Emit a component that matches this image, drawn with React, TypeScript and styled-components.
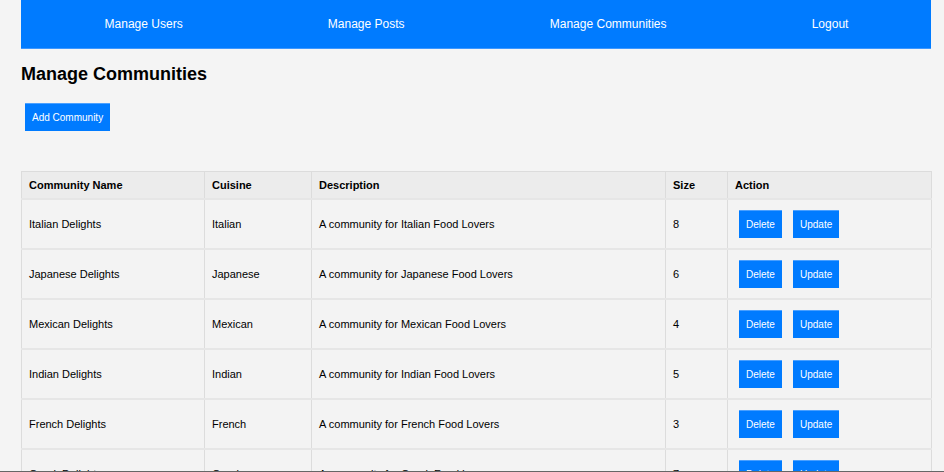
import React from "react";
import styled, { createGlobalStyle } from "styled-components";

const Global = createGlobalStyle`
  html, body { margin: 0; padding: 0; background: #f4f4f4; }
  body { font-family: "Liberation Sans", Arial, sans-serif; color: #000; overflow: hidden; }
  * { box-sizing: border-box; }
`;

const Page = styled.div`
  padding: 0 13px 0 21px;
`;

const Nav = styled.nav`
  height: 49px;
  background: #007bff;
  border-bottom: 1px solid #3d97ff;
  padding: 0 10px 0 11px;
  display: flex;
  align-items: center;
  justify-content: space-around;
`;

const NavLink = styled.a`
  color: #fff;
  font-size: 12px;
  text-decoration: none;
`;

const Title = styled.h2`
  font-size: 18px;
  line-height: 21px;
  font-weight: bold;
  margin: 15px 0 14px;
`;

const Button = styled.button`
  display: inline-block;
  background: #007bff;
  color: #fff;
  border: none;
  border-top: 1px solid #4aa0ff;
  height: 28px;
  padding: 0 7px;
  margin: 4px;
  font-family: "Liberation Sans", Arial, sans-serif;
  font-size: 10px;
  vertical-align: middle;
  cursor: pointer;
`;

const Table = styled.table`
  margin-top: 36px;
  width: 910px;
  border-collapse: collapse;
  table-layout: fixed;
  font-size: 11px;
`;

const Th = styled.th<{ $w: number }>`
  width: ${(p) => p.$w}px;
  height: 27px;
  padding: 0 7px;
  text-align: left;
  font-weight: bold;
  background: #ececec;
  border: 1px solid #dcdcdc;
`;

const Td = styled.td`
  height: 50px;
  padding: 0 7px;
  border: 1px solid #dcdcdc;
  border-top: 2px solid #e6e6e6;
  background: #f3f3f3;
  white-space: nowrap;
`;

const BottomEdge = styled.div`
  position: fixed;
  left: 0;
  right: 0;
  bottom: 0;
  height: 1px;
  background: #666;
`;

const rows = [
  { name: "Italian Delights", cuisine: "Italian", size: 8 },
  { name: "Japanese Delights", cuisine: "Japanese", size: 6 },
  { name: "Mexican Delights", cuisine: "Mexican", size: 4 },
  { name: "Indian Delights", cuisine: "Indian", size: 5 },
  { name: "French Delights", cuisine: "French", size: 3 },
  { name: "Greek Delights", cuisine: "Greek", size: 7 },
];

export default function App() {
  return (
    <>
      <Global />
      <Page>
        <Nav>
          <NavLink href="#">Manage Users</NavLink>
          <NavLink href="#">Manage Posts</NavLink>
          <NavLink href="#">Manage Communities</NavLink>
          <NavLink href="#">Logout</NavLink>
        </Nav>
        <Title>Manage Communities</Title>
        <Button>Add Community</Button>
        <Table>
          <thead>
            <tr>
              <Th $w={183}>Community Name</Th>
              <Th $w={107}>Cuisine</Th>
              <Th $w={354}>Description</Th>
              <Th $w={62}>Size</Th>
              <Th $w={204}>Action</Th>
            </tr>
          </thead>
          <tbody>
            {rows.map((r) => (
              <tr key={r.name}>
                <Td>{r.name}</Td>
                <Td>{r.cuisine}</Td>
                <Td>A community for {r.cuisine} Food Lovers</Td>
                <Td>{r.size}</Td>
                <Td>
                  <Button>Delete</Button> <Button>Update</Button>
                </Td>
              </tr>
            ))}
          </tbody>
        </Table>
      </Page>
      <BottomEdge />
    </>
  );
}
